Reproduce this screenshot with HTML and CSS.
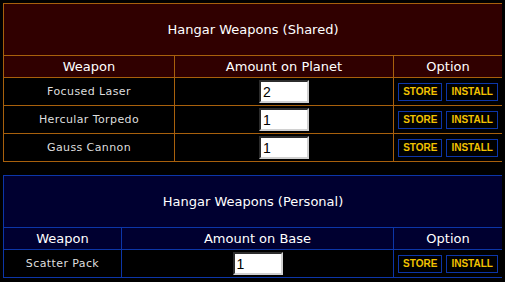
FILE: index.html
```html
<!DOCTYPE html>
<html>
<head>
<meta charset="utf-8">
<link rel="stylesheet" href="styles.css">
</head>
<body>
<table class="hangar shared">
  <colgroup><col class="c1"><col class="c2"><col class="c3"></colgroup>
  <tr><td class="title" colspan="3">Hangar Weapons (Shared)</td></tr>
  <tr class="head"><td>Weapon</td><td>Amount on Planet</td><td>Option</td></tr>
  <tr class="row"><td class="name">Focused Laser</td><td><input class="amt" type="text" value="2"></td><td><div class="opts"><button class="btn">STORE</button><button class="btn">INSTALL</button></div></td></tr>
  <tr class="row"><td class="name">Hercular Torpedo</td><td><input class="amt" type="text" value="1"></td><td><div class="opts"><button class="btn">STORE</button><button class="btn">INSTALL</button></div></td></tr>
  <tr class="row"><td class="name">Gauss Cannon</td><td><input class="amt" type="text" value="1"></td><td><div class="opts"><button class="btn">STORE</button><button class="btn">INSTALL</button></div></td></tr>
</table>
<table class="hangar personal">
  <colgroup><col class="c1"><col class="c2"><col class="c3"></colgroup>
  <tr><td class="title" colspan="3">Hangar Weapons (Personal)</td></tr>
  <tr class="head"><td>Weapon</td><td>Amount on Base</td><td>Option</td></tr>
  <tr class="row"><td class="name">Scatter Pack</td><td><input class="amt" type="text" value="1"></td><td><div class="opts"><button class="btn">STORE</button><button class="btn">INSTALL</button></div></td></tr>
</table>
</body>
</html>
```
FILE: styles.css
```css
html, body {
  background: #000;
}
body {
  margin: 3px;
  font-family: "DejaVu Sans", Verdana, sans-serif;
  color: #fff;
}
.hangar {
  border-collapse: collapse;
  width: 500px;
  table-layout: fixed;
}
.hangar td {
  padding: 0;
  text-align: center;
  vertical-align: middle;
}
.shared td { border: 1px solid #a8600c; }
.personal td { border: 1px solid #0c36a8; }
.shared .c1 { width: 171px; }
.shared .c2 { width: 219px; }
.personal .c1 { width: 118px; }
.personal .c2 { width: 272px; }
.c3 { width: 109px; }
.title {
  height: 51px;
  font-size: 13px;
}
.shared .title, .shared .head td { background: #300000; }
.personal .title, .personal .head td { background: #000030; }
.personal { margin-top: 13px; }
.head td {
  height: 21px;
  font-size: 13px;
}
.row td {
  height: 27px;
  background: #000;
}
.name {
  font-size: 11px;
  letter-spacing: 0.4px;
  color: #dedede;
}
.amt {
  box-sizing: border-box;
  width: 50px;
  height: 23px;
  padding: 0 2px;
  border: 2px inset #d0d0d0;
  border-top-color: #808080;
  border-left-color: #808080;
  background: #fff;
  color: #000;
  font-family: "Liberation Sans", Arial, sans-serif;
  font-size: 14px;
  display: block;
  margin: 0 auto;
}
.opts {
  display: flex;
  justify-content: center;
  gap: 4px;
}
.btn {
  box-sizing: border-box;
  height: 18px;
  padding: 0 4px;
  border: 1px solid #0c36a8;
  background: #000;
  color: #f2c200;
  font-family: "Liberation Sans", Arial, sans-serif;
  font-weight: bold;
  font-size: 10px;
  line-height: 16px;
}
```
